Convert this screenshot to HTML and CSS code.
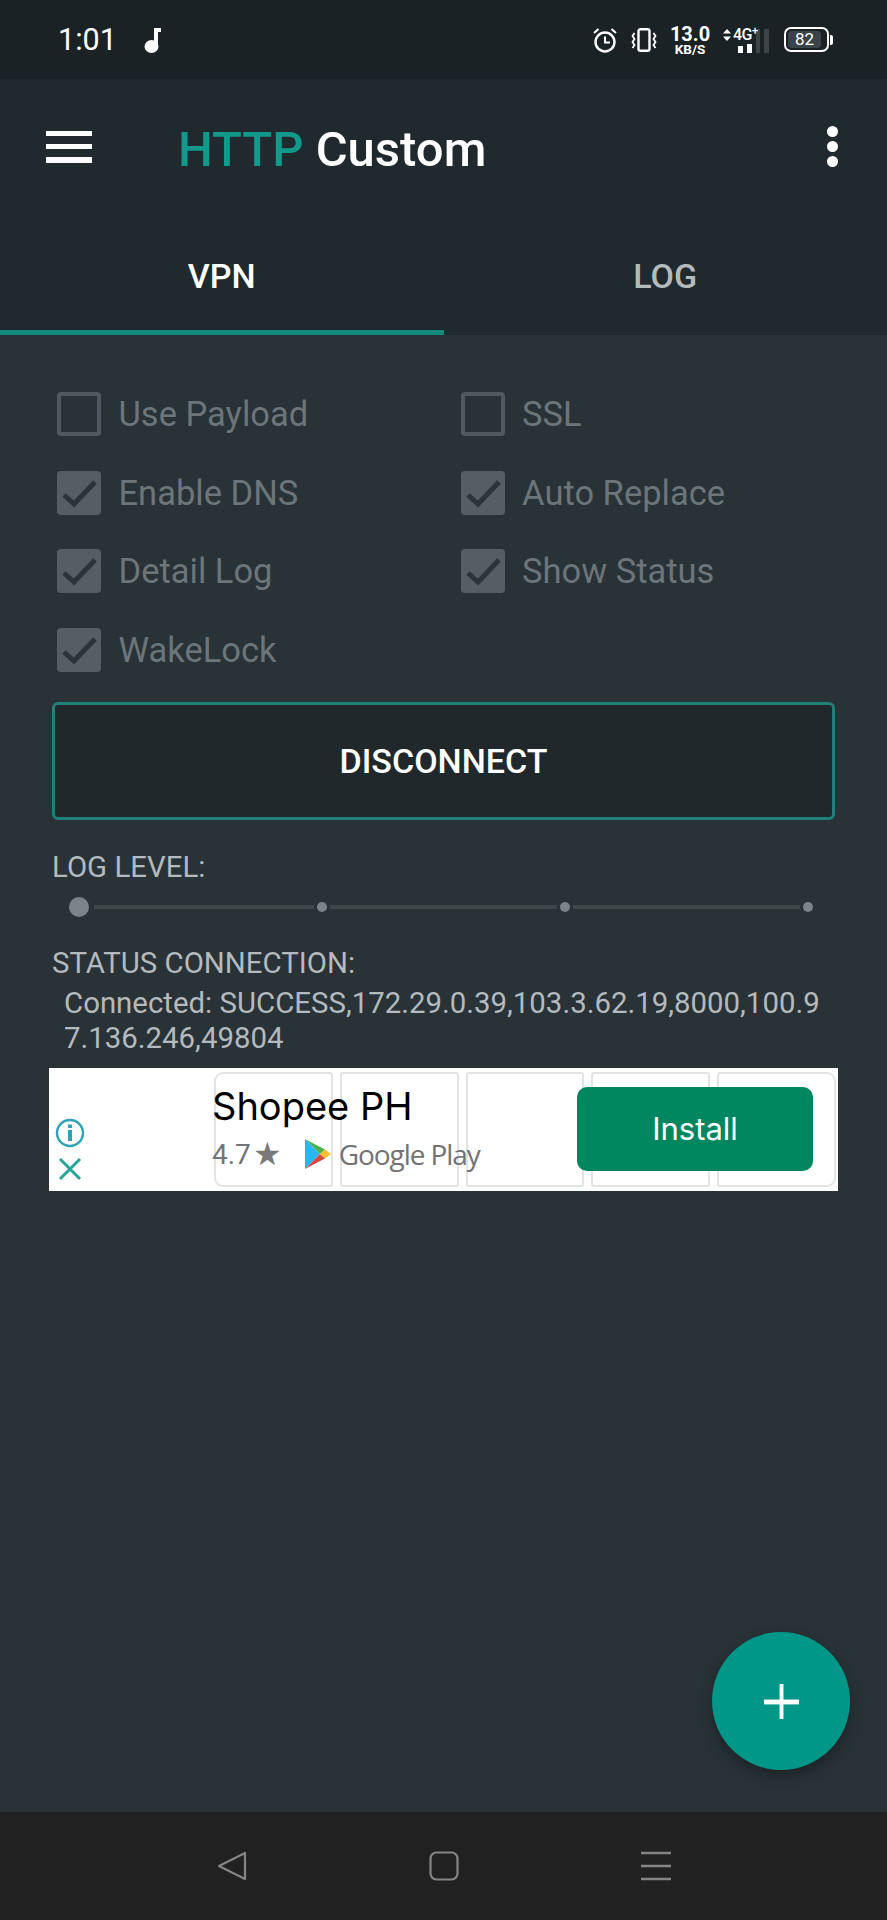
FILE: index.html
```html
<!DOCTYPE html>
<html lang="en">
<head>
    <meta charset="UTF-8">
    <meta name="viewport" content="width=device-width, initial-scale=1.0">
    <title>HTTP Custom</title>
    <link rel="stylesheet" href="styles.css">
</head>
<body>
<div class="phone">
    <div class="statusbar">
        <span class="clock">1:01</span>
        <svg class="note" viewBox="0 0 18 26" width="18" height="26">
            <ellipse cx="7.5" cy="19.5" rx="7" ry="6.5" fill="#fff"/>
            <path d="M10 20V1h7v4h-3v15z" fill="#fff"/>
        </svg>
        <div class="status-icons">
            <svg viewBox="0 0 24 26" width="24" height="26" fill="none" stroke="#fff">
                <circle cx="12" cy="15" r="9.5" stroke-width="2.4"/>
                <path d="M12 9.5V15.5H17" stroke-width="2"/>
                <path d="M1 6L5.5 2M23 6L18.5 2" stroke-width="2"/>
            </svg>
            <svg viewBox="0 0 26 24" width="26" height="24" fill="none" stroke="#fff" stroke-width="2.4">
                <rect x="7.500" y="1.200" width="11" height="21.600" rx="2"/>
                <path d="M3.500 5L1.500 8L3.500 11L1.500 14L3.500 17L1.500 20M22.500 5L24.500 8L22.500 11L24.500 14L22.500 17L24.500 20" stroke-width="1.800"/>
            </svg>
            <div class="speed">
                <span class="speed-num">13.0</span>
                <span class="speed-unit">KB/S</span>
            </div>
            <div class="network">
                <svg viewBox="0 0 8 12" width="8" height="12" fill="#fff">
                    <path d="M4 0L8 4.5H0zM4 12L0 7.5H8z"/>
                </svg>
                <span class="net-label">4G<sup>+</sup></span>
                <i class="bar bar-a"></i>
                <i class="bar bar-b"></i>
                <i class="bar bar-off"></i>
                <i class="bar bar-off"></i>
            </div>
            <div class="battery">
                <span class="battery-body"><span class="battery-fill">82</span></span>
                <i class="battery-nub"></i>
            </div>
        </div>
    </div>

    <div class="toolbar">
        <svg class="menu" viewBox="0 0 46 32" width="46" height="32" fill="#fff">
            <rect y="0" width="46" height="5"/>
            <rect y="13" width="46" height="5"/>
            <rect y="26" width="46" height="6"/>
        </svg>
        <h1 class="title"><span class="title-accent">HTTP</span> Custom</h1>
        <div class="more">
            <i></i><i></i><i></i>
        </div>
    </div>

    <div class="tabs">
        <div class="tab active">VPN</div>
        <div class="tab">LOG</div>
    </div>

    <div class="content">
        <div class="options">
            <div class="option"><span class="box"></span>Use Payload</div>
            <div class="option"><span class="box"></span>SSL</div>
            <div class="option"><span class="box checked"><svg viewBox="0 0 44 44" width="44" height="44"><path d="M7 24L17 33L38 11" fill="none" stroke="#2b3439" stroke-width="5"/></svg></span>Enable DNS</div>
            <div class="option"><span class="box checked"><svg viewBox="0 0 44 44" width="44" height="44"><path d="M7 24L17 33L38 11" fill="none" stroke="#2b3439" stroke-width="5"/></svg></span>Auto Replace</div>
            <div class="option"><span class="box checked"><svg viewBox="0 0 44 44" width="44" height="44"><path d="M7 24L17 33L38 11" fill="none" stroke="#2b3439" stroke-width="5"/></svg></span>Detail Log</div>
            <div class="option"><span class="box checked"><svg viewBox="0 0 44 44" width="44" height="44"><path d="M7 24L17 33L38 11" fill="none" stroke="#2b3439" stroke-width="5"/></svg></span>Show Status</div>
            <div class="option"><span class="box checked"><svg viewBox="0 0 44 44" width="44" height="44"><path d="M7 24L17 33L38 11" fill="none" stroke="#2b3439" stroke-width="5"/></svg></span>WakeLock</div>
        </div>

        <button class="connect">DISCONNECT</button>

        <div class="label log-label">LOG LEVEL:</div>
        <div class="slider">
            <i class="thumb"></i>
            <i class="seg seg-first"></i>
            <i class="dot"></i>
            <i class="seg"></i>
            <i class="dot"></i>
            <i class="seg"></i>
            <i class="dot"></i>
        </div>

        <div class="label status-label">STATUS CONNECTION:</div>
        <div class="status-text">Connected: SUCCESS,172.29.0.39,103.3.62.19,8000,100.97.136.246,49804</div>

        <div class="ad">
            <div class="ad-cards">
                <i></i><i></i><i></i><i></i><i></i>
            </div>
            <div class="ad-controls">
                <svg viewBox="0 0 30 30" width="30" height="30" fill="none" stroke="#2da3b5">
                    <circle cx="15" cy="15" r="13" stroke-width="2.4"/>
                    <path d="M15 12V23" stroke-width="4"/>
                    <path d="M15 6.500V10" stroke-width="4"/>
                </svg>
                <svg viewBox="0 0 24 24" width="24" height="24" fill="none" stroke="#25a597" stroke-width="3">
                    <path d="M2 2L22 22M22 2L2 22"/>
                </svg>
            </div>
            <div class="ad-info">
                <div class="ad-name">Shopee PH</div>
                <div class="ad-meta">
                    <span>4.7</span>
                    <span class="star">★</span>
                    <svg class="play" viewBox="0 0 26 32" width="26" height="32">
                        <path d="M0 1L15 16L0 31z" fill="#29b6f6"/>
                        <path d="M0 1L20 11.500L15 16z" fill="#4caf50"/>
                        <path d="M0 31L20 20.500L15 16z" fill="#d9483b"/>
                        <path d="M20 11.500L26 16L20 20.500L15 16z" fill="#fbc02d"/>
                    </svg>
                    <span class="store">Google Play</span>
                </div>
            </div>
            <div class="install">Install</div>
        </div>
    </div>

    <div class="fab">
        <svg viewBox="0 0 36 36" width="35" height="35" fill="#fff">
            <rect x="16" y="0" width="4" height="36"/>
            <rect x="0" y="16" width="36" height="5"/>
        </svg>
    </div>

    <div class="navbar">
        <svg viewBox="0 0 30 30" width="30" height="30" fill="none" stroke="#858585" stroke-width="2.200" stroke-linejoin="round">
            <path d="M28 2V28L2 15z"/>
        </svg>
        <svg viewBox="0 0 30 30" width="30" height="30" fill="none" stroke="#858585" stroke-width="2.200">
            <rect x="1.500" y="1.500" width="27" height="27" rx="6"/>
        </svg>
        <svg viewBox="0 0 30 30" width="30" height="30" fill="none" stroke="#858585" stroke-width="2.400">
            <path d="M0 2H30M0 15H30M0 28H30"/>
        </svg>
    </div>
</div>
</body>
</html>
```

FILE: styles.css
```css
* {
    box-sizing: border-box;
}
body {
    margin: 0;
    font-family: Roboto, "Liberation Sans", sans-serif;
    background: #283237;
}
.phone {
    position: relative;
    width: 887px;
    height: 1920px;
    display: flex;
    flex-direction: column;
    overflow: hidden;
}

/* status bar */
.statusbar {
    height: 79px;
    flex: none;
    background: #1a2226;
    color: #fff;
    display: flex;
    align-items: center;
    padding: 0 54px 0 58px;
}
.clock {
    font-size: 30.5px;
    width: 86px;
}
.note {
    margin-top: 1px;
}
.status-icons {
    margin-left: auto;
    display: flex;
    align-items: center;
    gap: 14px;
}
.speed {
    display: flex;
    flex-direction: column;
    align-items: center;
    font-weight: 700;
    width: 38px;
}
.speed-num {
    font-size: 20px;
    line-height: 18px;
}
.speed-unit {
    font-size: 13.5px;
    line-height: 12px;
}
.network {
    width: 46px;
    height: 26px;
    display: flex;
    align-items: flex-end;
    position: relative;
    gap: 4px;
    padding-left: 15px;
}
.network svg {
    position: absolute;
    left: 0;
    top: 2px;
}
.net-label {
    position: absolute;
    left: 10px;
    top: 0;
    font-size: 16px;
    line-height: 15px;
    font-weight: 500;
    letter-spacing: -0.5px;
}
.net-label sup {
    font-size: 11px;
    line-height: 0;
}
.bar {
    width: 5px;
    background: #fff;
}
.bar-a {
    height: 7px;
}
.bar-b {
    height: 9px;
}
.bar-off {
    height: 24px;
    background: #3c4448;
}
.battery {
    display: flex;
    align-items: center;
    gap: 1px;
    margin-left: 1px;
}
.battery-body {
    width: 45px;
    height: 25px;
    border: 2px solid #fff;
    border-radius: 7px;
    padding: 2px;
    display: flex;
}
.battery-fill {
    width: 33px;
    background: #3a4349;
    border-radius: 4px;
    font-size: 17px;
    line-height: 17px;
    text-align: center;
}
.battery-nub {
    width: 3px;
    height: 10px;
    background: #fff;
    border-radius: 0 2px 2px 0;
}

/* toolbar and tabs */
.toolbar {
    height: 141px;
    flex: none;
    background: #20292e;
    display: flex;
    align-items: center;
    padding: 0 49px 6px 46px;
}
.menu {
    margin-right: 86px;
}
.title {
    flex: 1;
    margin: 6px 0 0;
    font-size: 49px;
    font-weight: 500;
    color: #fff;
}
.title-accent {
    color: #119a8c;
}
.more {
    display: flex;
    flex-direction: column;
    gap: 4px;
}
.more i {
    width: 11px;
    height: 11px;
    border-radius: 50%;
    background: #fff;
}
.tabs {
    height: 115px;
    flex: none;
    background: #20292e;
    display: flex;
}
.tab {
    flex: 1;
    display: flex;
    align-items: center;
    justify-content: center;
    padding-top: 2px;
    font-size: 34px;
    font-weight: 500;
    color: #b5babc;
    border-bottom: 5px solid transparent;
}
.tab.active {
    color: #fff;
    border-bottom-color: #138a7e;
}

/* main panel */
.content {
    flex: 1;
    background: #283237;
    padding-top: 57px;
}
.options {
    display: grid;
    grid-template-columns: 403.6px 1fr;
    grid-auto-rows: 44px;
    row-gap: 34.7px;
    padding-left: 57px;
}
.option {
    display: flex;
    align-items: center;
    gap: 17.5px;
    font-size: 34.5px;
    color: #6c757a;
}
.box {
    width: 44px;
    height: 44px;
    border: 4px solid #50595e;
    border-radius: 4px;
}
.box.checked {
    background: #555e64;
    border: 0;
}
.box svg {
    display: block;
}
.connect {
    display: block;
    width: 783px;
    height: 118px;
    margin: 30px 0 0 52px;
    background: #20282c;
    border: 3px solid #1f8177;
    border-radius: 6px;
    color: #fff;
    font-family: inherit;
    font-size: 34px;
    font-weight: 500;
}
.label {
    margin-left: 52px;
    font-size: 29.4px;
    line-height: 34px;
    color: #b4babd;
}
.log-label {
    margin-top: 30px;
}
.slider {
    display: flex;
    align-items: center;
    width: 744px;
    height: 20px;
    margin: 13px 0 0 69px;
}
.thumb {
    width: 20px;
    height: 20px;
    border-radius: 50%;
    background: #7d8488;
    margin-right: 5px;
}
.seg {
    width: 227px;
    height: 4px;
    margin: 0 3px;
    background: #3d4849;
}
.seg-first {
    width: 220px;
    margin-left: 0;
}
.dot {
    width: 10px;
    height: 10px;
    border-radius: 50%;
    background: #7d8488;
}
.status-label {
    margin-top: 29px;
}
.status-text {
    width: 762px;
    margin: 6px 0 0 64px;
    font-size: 29.4px;
    line-height: 34.5px;
    color: #b4babd;
    word-break: break-all;
}

/* ad banner */
.ad {
    position: relative;
    width: 789px;
    height: 123px;
    margin: 13px 0 0 49px;
    background: #fff;
    display: flex;
    align-items: flex-start;
}
.ad-cards {
    position: absolute;
    left: 165px;
    top: 4px;
    width: 622px;
    height: 115px;
    display: flex;
    gap: 7px;
}
.ad-cards i {
    flex: 1;
    border: 2px solid #e3e3e3;
    border-radius: 3px;
}
.ad-cards i:first-child {
    border-radius: 9px 3px 3px 9px;
}
.ad-cards i:last-child {
    border-radius: 3px 9px 9px 3px;
}
.ad-controls {
    position: relative;
    width: 163px;
    height: 100%;
    padding: 50px 0 0 6px;
    display: flex;
    flex-direction: column;
    align-items: flex-start;
    gap: 9px;
}
.ad-controls svg + svg {
    margin-left: 3px;
}
.ad-info {
    position: relative;
    width: 365px;
    color: #70757a;
}
.ad-name {
    margin-top: 13px;
    font-family: Inter, Roboto, sans-serif;
    font-size: 38px;
    line-height: 50px;
    color: #000;
}
.ad-meta {
    display: flex;
    align-items: center;
    height: 36px;
    margin-top: 5px;
    font-size: 28px;
}
.star {
    margin-left: 2px;
    font-size: 32px;
    color: #7a7a7a;
}
.play {
    margin-left: 23px;
}
.store {
    margin-left: 8px;
    font-family: "Open Sans", sans-serif;
    font-size: 28px;
    letter-spacing: -1.1px;
    color: #737373;
}
.install {
    position: relative;
    width: 236px;
    height: 84px;
    margin-top: 19px;
    background: #01875f;
    border-radius: 10px;
    color: #fff;
    font-family: Inter, Roboto, sans-serif;
    font-size: 31px;
    line-height: 84px;
    text-align: center;
}

/* floating button */
.fab {
    position: absolute;
    left: 712px;
    top: 1632px;
    width: 138px;
    height: 138px;
    border-radius: 50%;
    background: #009688;
    box-shadow: 0 6px 14px rgba(0, 0, 0, 0.3);
    display: flex;
    align-items: center;
    justify-content: center;
}

/* nav bar */
.navbar {
    height: 108px;
    flex: none;
    background: #212121;
    display: flex;
    align-items: center;
    justify-content: center;
    gap: 182px;
}
```
